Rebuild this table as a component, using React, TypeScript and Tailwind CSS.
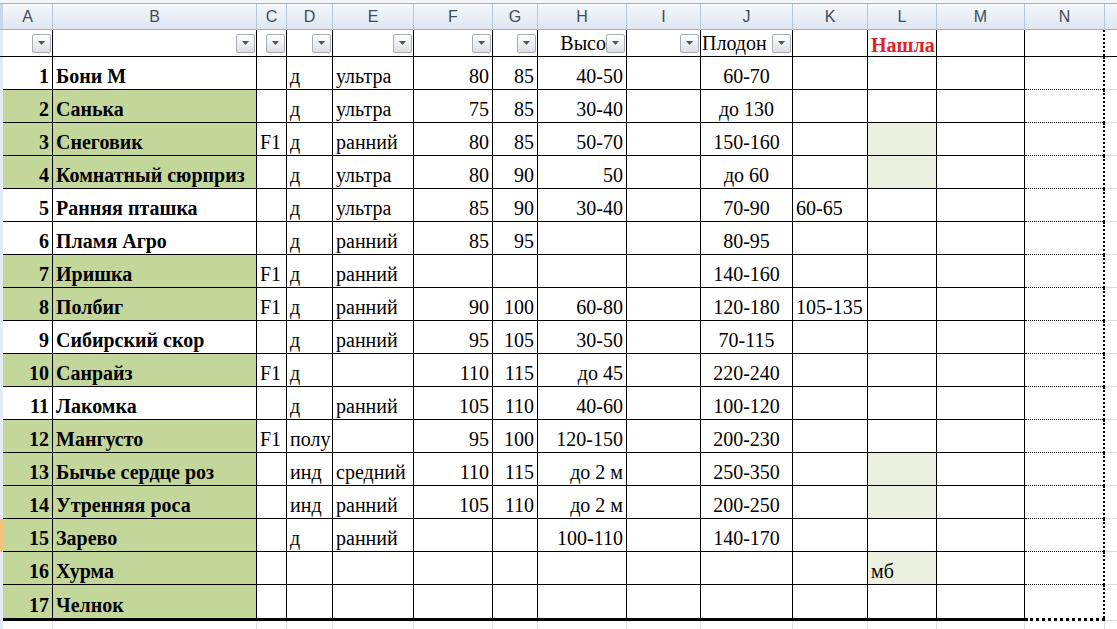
import React from 'react';

type Align = 'left' | 'right' | 'center';

interface Col {
  key: string;
  width: string;
  align: Align;
  bold?: boolean;
}

const COLS: Col[] = [
  { key: 'A', width: 'w-[50px]', align: 'right', bold: true },
  { key: 'B', width: 'w-[204px]', align: 'left', bold: true },
  { key: 'C', width: 'w-[30px]', align: 'left' },
  { key: 'D', width: 'w-[46px]', align: 'left' },
  { key: 'E', width: 'w-[81px]', align: 'left' },
  { key: 'F', width: 'w-[79px]', align: 'right' },
  { key: 'G', width: 'w-[45px]', align: 'right' },
  { key: 'H', width: 'w-[89px]', align: 'right' },
  { key: 'I', width: 'w-[74px]', align: 'left' },
  { key: 'J', width: 'w-[92px]', align: 'center' },
  { key: 'K', width: 'w-[75px]', align: 'left' },
  { key: 'L', width: 'w-[69px]', align: 'left' },
  { key: 'M', width: 'w-[88px]', align: 'left' },
  { key: 'N', width: 'w-[80px]', align: 'left' },
];

const ALIGN: Record<Align, string> = {
  left: 'justify-start',
  right: 'justify-end',
  center: 'justify-center',
};

// A..L values; green = A/B filled, mark = light green in L
const ROWS: { cells: string[]; green?: boolean; mark?: boolean }[] = [
  { cells: ['1', 'Бони М', '', 'д', 'ультра', '80', '85', '40-50', '', '60-70', '', ''] },
  { cells: ['2', 'Санька', '', 'д', 'ультра', '75', '85', '30-40', '', 'до 130', '', ''], green: true },
  { cells: ['3', 'Снеговик', 'F1', 'д', 'ранний', '80', '85', '50-70', '', '150-160', '', ''], green: true, mark: true },
  { cells: ['4', 'Комнатный сюрприз', '', 'д', 'ультра', '80', '90', '50', '', 'до 60', '', ''], green: true, mark: true },
  { cells: ['5', 'Ранняя пташка', '', 'д', 'ультра', '85', '90', '30-40', '', '70-90', '60-65', ''] },
  { cells: ['6', 'Пламя Агро', '', 'д', 'ранний', '85', '95', '', '', '80-95', '', ''] },
  { cells: ['7', 'Иришка', 'F1', 'д', 'ранний', '', '', '', '', '140-160', '', ''], green: true },
  { cells: ['8', 'Полбиг', 'F1', 'д', 'ранний', '90', '100', '60-80', '', '120-180', '105-135', ''], green: true },
  { cells: ['9', 'Сибирский скор', '', 'д', 'ранний', '95', '105', '30-50', '', '70-115', '', ''] },
  { cells: ['10', 'Санрайз', 'F1', 'д', '', '110', '115', 'до 45', '', '220-240', '', ''], green: true },
  { cells: ['11', 'Лакомка', '', 'д', 'ранний', '105', '110', '40-60', '', '100-120', '', ''] },
  { cells: ['12', 'Мангусто', 'F1', 'полу', '', '95', '100', '120-150', '', '200-230', '', ''], green: true },
  { cells: ['13', 'Бычье сердце роз', '', 'инд', 'средний', '110', '115', 'до 2 м', '', '250-350', '', ''], green: true, mark: true },
  { cells: ['14', 'Утренняя роса', '', 'инд', 'ранний', '105', '110', 'до 2 м', '', '200-250', '', ''], green: true, mark: true },
  { cells: ['15', 'Зарево', '', 'д', 'ранний', '', '', '100-110', '', '140-170', '', ''], green: true },
  { cells: ['16', 'Хурма', '', '', '', '', '', '', '', '', '', 'мб'], green: true, mark: true },
  { cells: ['17', 'Челнок', '', '', '', '', '', '', '', '', '', ''], green: true },
];

const FilterBtn = () => (
  <span className="w-[19px] h-[19px] shrink-0 rounded-[2px] border border-[#a7adb5] bg-linear-to-b from-white to-[#dcdfe4] flex items-center justify-center">
    <svg width="7" height="4" viewBox="0 0 7 4"><path d="M0 0h7L3.5 4z" fill="#555" /></svg>
  </span>
);

export default function App() {
  return (
    <div className="w-[1117px] h-[629px] overflow-hidden bg-white font-['Liberation_Serif',serif] text-black">
      {/* top strip */}
      <div className="h-[4px] bg-[#f3f5f8] border-b border-[#9fb2c8]" />

      {/* column letters */}
      <div className="flex h-[26px] bg-linear-to-b from-[#f5f8fc] to-[#dde6f1] border-b border-[#9eb3cb] font-['Liberation_Sans',sans-serif] text-[16px] text-[#3f4c5e]">
        <div className="w-[3px] shrink-0 bg-[#c9d7e8]" />
        {COLS.map((c) => (
          <div key={c.key} className={`${c.width} shrink-0 border-r border-[#b5c6d9] flex items-center justify-center`}>{c.key}</div>
        ))}
        <div className="flex-1" />
      </div>

      {/* autofilter row */}
      <div className="flex h-[27px] border-b border-black text-[20px] leading-none">
        <div className="w-[3px] shrink-0 bg-[#e4ebf4]" />
        {COLS.map((c) => {
          const last = c.key === 'N';
          const border = last ? 'border-r-2 border-dotted border-black' : 'border-r border-black';
          return (
            <div key={c.key} className={`${c.width} shrink-0 ${border} flex items-center justify-end overflow-hidden pr-[1px]`}>
              {c.key === 'H' && <span className="whitespace-nowrap">Высо</span>}
              {c.key === 'J' && <span className="flex-1 whitespace-nowrap pl-[1px]">Плодон</span>}
              {c.key === 'L' && <span className="flex-1 pl-[3px] pt-[4px] font-bold text-[#e01e26]">Нашла</span>}
              {'ABCDEFGHIJ'.includes(c.key) && <FilterBtn />}
            </div>
          );
        })}
        <div className="flex-1" />
      </div>

      {/* data rows */}
      {ROWS.map((r, i) => {
        const isLast = i === ROWS.length - 1;
        const rowH = isLast ? 'h-[36px] border-b-[3px]' : 'h-[33px] border-b';
        return (
          <div key={i} className="flex text-[20px] leading-none">
            <div className={`w-[3px] shrink-0 ${i === 14 ? 'bg-[#f7c27a]' : 'bg-[#e4ebf4]'}`} />
            {COLS.map((c, j) => {
              const val = r.cells[j] ?? '';
              const last = c.key === 'N';
              const right = last ? 'border-r-2 border-r-black border-dotted' : 'border-r border-black';
              let bg = '';
              if (r.green && j < 2) bg = 'bg-[#c4d79b]';
              if (r.mark && c.key === 'L') bg = 'bg-[#ebf1de]';
              return (
                <div
                  key={c.key}
                  className={`${c.width} shrink-0 ${rowH} ${right} border-b-black ${bg} ${ALIGN[c.align]} ${c.bold ? 'font-bold' : ''} flex items-end px-[3px] pb-[3px] whitespace-nowrap overflow-hidden`}
                >
                  {val}
                </div>
              );
            })}
            <div className={`flex-1 ${isLast ? 'h-[36px]' : 'h-[33px]'} border-b border-[#dcdcdc]`} />
          </div>
        );
      })}

      {/* below the table */}
      <div className="flex h-[8px]">
        <div className="w-[3px] shrink-0 bg-[#e4ebf4]" />
        {COLS.map((c) => (
          <div key={c.key} className={`${c.width} shrink-0 border-r border-[#e0e0e0]`} />
        ))}
      </div>
    </div>
  );
}
